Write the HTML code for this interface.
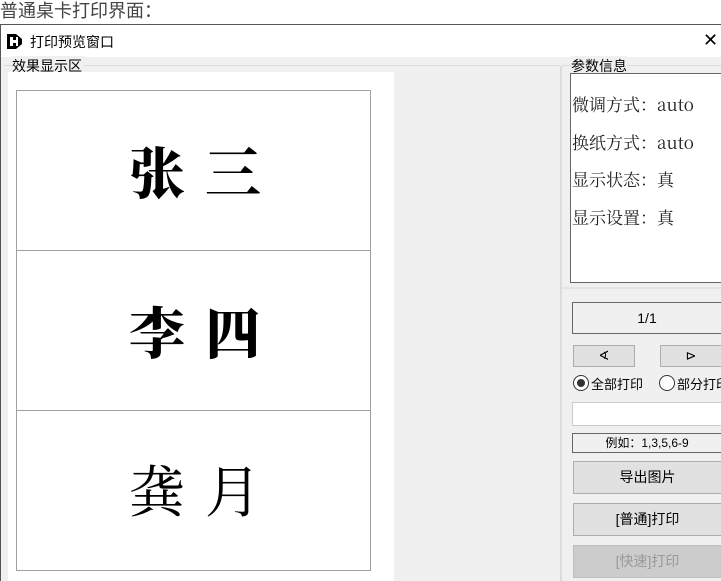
<!DOCTYPE html>
<html><head><meta charset="utf-8"><style>
*{margin:0;padding:0;box-sizing:border-box}
body{width:721px;height:581px;overflow:hidden;background:#fff;position:relative;font-family:"Liberation Sans","Noto Sans CJK SC",sans-serif;font-size:13px;color:#000}
.a{position:absolute;white-space:nowrap}
.card{position:absolute;left:16px;width:355px;height:161px;border:1px solid #a0a0a0;background:#fff}
.nm{position:absolute;left:112px;font-family:"Noto Serif CJK SC",serif;font-weight:900;font-size:56px;line-height:56px;white-space:nowrap}
.nm span{display:inline-block;width:76px}
.p{position:absolute;left:572px;font-family:"Noto Serif CJK SC","Liberation Mono",serif;font-size:17px;color:#222;white-space:nowrap}
.btn{position:absolute;background:#e1e1e1;border:1px solid #adadad;text-align:center;white-space:nowrap}
</style></head><body>
<div class="a" style="left:0;top:0;font-size:18px;color:#444;line-height:22px">普通桌卡打印界面：</div>
<div class="a" style="left:0;top:24px;width:721px;height:557px;border-top:1px solid #555;border-left:1px solid #555;background:#f0f0f0"></div>
<div class="a" style="left:1px;top:25px;width:720px;height:32px;background:#fff"></div>
<svg class="a" style="left:7px;top:34px" width="16" height="15"><path d="M0 0H9L15 5V10L9 15H0Z" fill="#000"/><rect x="3" y="3" width="3" height="9" fill="#fff"/><rect x="6" y="6" width="3" height="3" fill="#fff"/><rect x="9" y="3" width="2" height="9" fill="#fff"/></svg>
<div class="a" style="left:30px;top:32px;font-size:14px">打印预览窗口</div>
<div class="a" style="left:703px;top:30px;font-size:18px;font-weight:300">✕</div>
<div class="a" style="left:4px;top:65px;width:556px;height:1px;background:#dcdcdc"></div>
<div class="a" style="left:12px;top:56px;font-size:14px;background:#f0f0f0;padding-right:2px">效果显示区</div>
<div class="a" style="left:8px;top:72px;width:386px;height:509px;background:#fff"></div>
<div class="card" style="top:90px"><div class="nm" style="top:52px"><span>张</span><span>三</span></div></div>
<div class="card" style="top:250px"><div class="nm" style="top:52px"><span>李</span><span>四</span></div></div>
<div class="card" style="top:410px"><div class="nm" style="top:50px;font-weight:400"><span>龚</span><span>月</span></div></div>
<div class="a" style="left:560px;top:66px;width:2px;height:515px;background:#dcdcdc"></div>
<div class="a" style="left:562px;top:65px;width:159px;height:1px;background:#dcdcdc"></div>
<div class="a" style="left:571px;top:56px;font-size:14px;background:#f0f0f0">参数信息</div>
<div class="a" style="left:570px;top:73px;width:151px;height:210px;background:#fff;border:1px solid #666;border-right:none"></div>
<div class="p" style="top:91px">微调方式：auto</div>
<div class="p" style="top:129px">换纸方式：auto</div>
<div class="p" style="top:166px">显示状态：真</div>
<div class="p" style="top:204px">显示设置：真</div>
<div class="a" style="left:562px;top:287px;width:159px;height:2px;background:#e4e4e4"></div>
<div class="a" style="left:572px;top:302px;width:149px;height:32px;border:1px solid #666;border-right:none;text-align:center;line-height:30px;font-size:14px">1/1</div>
<div class="btn" style="left:573px;top:345px;width:62px;height:22px;line-height:20px">∢</div>
<div class="btn" style="left:660px;top:345px;width:61px;height:22px;line-height:20px;border-right:none">⊳</div>
<div class="a" style="left:573px;top:375px;width:16px;height:16px;border:1px solid #333;border-radius:50%;background:#fff"><div class="a" style="left:3px;top:3px;width:8px;height:8px;border-radius:50%;background:#333"></div></div>
<div class="a" style="left:591px;top:374px">全部打印</div>
<div class="a" style="left:659px;top:375px;width:16px;height:16px;border:1px solid #333;border-radius:50%;background:#fff"></div>
<div class="a" style="left:677px;top:374px">部分打印</div>
<div class="a" style="left:572px;top:402px;width:149px;height:24px;background:#fff;border:1px solid #ccc;border-right:none"></div>
<div class="a" style="left:572px;top:433px;width:149px;height:20px;border:1px solid #666;border-right:none;text-align:center;font-size:12px;line-height:18px">例如：1,3,5,6-9</div>
<div class="btn" style="left:573px;top:461px;width:148px;height:33px;line-height:31px;font-size:14px;border-right:none">导出图片</div>
<div class="btn" style="left:573px;top:503px;width:148px;height:33px;line-height:31px;font-size:14px;border-right:none">[普通]打印</div>
<div class="btn" style="left:573px;top:545px;width:148px;height:33px;line-height:31px;font-size:14px;border-right:none;background:#ccc;border-color:#bfbfbf;color:#999">[快速]打印</div>
</body></html>
